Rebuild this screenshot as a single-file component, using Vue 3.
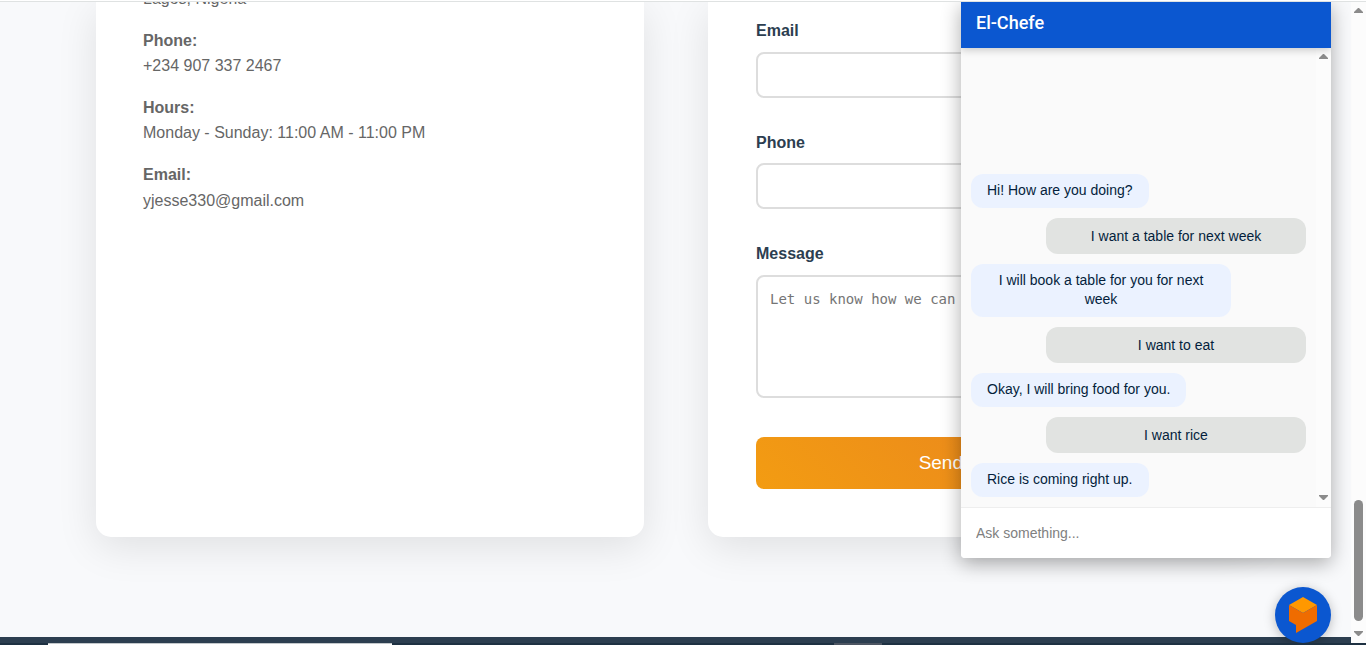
<script setup>
const details = [
  { label: 'Phone:', value: '+234 907 337 2467' },
  { label: 'Hours:', value: 'Monday - Sunday: 11:00 AM - 11:00 PM' },
  { label: 'Email:', value: 'yjesse330@gmail.com' },
]

const messages = [
  { from: 'bot', text: 'Hi! How are you doing?' },
  { from: 'user', text: 'I want a table for next week' },
  { from: 'bot', text: 'I will book a table for you for next week' },
  { from: 'user', text: 'I want to eat' },
  { from: 'bot', text: 'Okay, I will bring food for you.' },
  { from: 'user', text: 'I want rice' },
  { from: 'bot', text: 'Rice is coming right up.' },
]
</script>

<template>
  <div class="screen">
    <div class="edge"></div>
    <div class="viewport">
      <main class="page">
        <section class="contact">
          <div class="card info">
            <p>Lagos, Nigeria</p>
            <p v-for="d in details" :key="d.label">
              <strong>{{ d.label }}</strong><br />{{ d.value }}
            </p>
          </div>
          <form class="card form" @submit.prevent>
            <div class="field">
              <label for="email">Email</label>
              <input id="email" type="email" />
            </div>
            <div class="field">
              <label for="phone">Phone</label>
              <input id="phone" type="tel" />
            </div>
            <div class="field">
              <label for="message">Message</label>
              <textarea id="message" placeholder="Let us know how we can help"></textarea>
            </div>
            <button class="send" type="submit">Send Message</button>
          </form>
        </section>
        <footer class="footer"></footer>
      </main>
      <div class="scrollbar">
        <svg width="9" height="5" viewBox="0 0 9 5"><path d="M4 0h1l4 4v1H0V4z" /></svg>
        <div class="thumb"></div>
        <svg width="9" height="5" viewBox="0 0 9 5"><path d="M0 0h9v1L5 5H4L0 1z" /></svg>
      </div>

      <aside class="chat">
        <header class="chat-title">El-Chefe</header>
        <div class="chat-body">
          <div class="messages">
            <div v-for="(m, i) in messages" :key="i" class="bubble" :class="m.from">{{ m.text }}</div>
          </div>
          <div class="chat-scroll">
            <svg width="9" height="5" viewBox="0 0 9 5"><path d="M4 0h1l4 4v1H0V4z" /></svg>
            <svg width="9" height="5" viewBox="0 0 9 5"><path d="M0 0h9v1L5 5H4L0 1z" /></svg>
          </div>
        </div>
        <input class="ask" type="text" placeholder="Ask something..." aria-label="Ask something" />
      </aside>

      <button class="launcher" type="button" aria-label="Toggle chat">
        <svg width="28" height="36" viewBox="0 0 28 36">
          <path fill="#ff9800" d="M14 0L28 8L14 16L0 8z" />
          <path fill="#ef6c00" d="M0 8L14 16L28 8V24L7 36V28L0 24z" />
        </svg>
      </button>
    </div>
    <div class="taskbar">
      <div class="task-search"></div>
      <div class="task-app"></div>
    </div>
  </div>
</template>

<style>
body {
  margin: 0;
  overflow: hidden;
}
</style>

<style scoped>
* {
  box-sizing: border-box;
}
.screen {
  display: flex;
  flex-direction: column;
  height: 100vh;
  background: #f8f9fa;
  font-family: "Liberation Sans", Arial, sans-serif;
  font-size: 16px;
  line-height: 1.6;
}
.edge {
  flex: none;
  height: 2px;
  background: #fff;
  border-bottom: 1px solid #dfe2e2;
}
.viewport {
  position: relative;
  flex: 1;
  display: flex;
  min-height: 0;
  overflow: hidden;
}
.page {
  flex: 1;
  display: flex;
  flex-direction: column;
  background: #f8f9fb;
}
.contact {
  flex: 1;
  display: grid;
  grid-template-columns: 1fr 1fr;
  gap: 64px;
  padding: 0 95px 100px 96px;
}
.card {
  background: #fff;
  border-radius: 0 0 15px 15px;
  box-shadow: 0 10px 40px rgba(0, 0, 0, 0.1);
}
.info {
  padding: 0 47px;
  color: #666;
}
.info p {
  margin: 0 0 16px;
}
.info p:first-child {
  margin-top: -16px;
}
.form {
  display: flex;
  flex-direction: column;
  justify-content: flex-end;
  gap: 32px;
  padding: 0 48px 48px;
}
.field {
  display: flex;
  flex-direction: column;
  gap: 8px;
}
.field label {
  color: #2c3e50;
  font-weight: 700;
}
.field input,
.field textarea {
  display: block;
  width: 100%;
  height: 46px;
  margin: 0;
  padding: 13px 12px;
  border: 2px solid #ddd;
  border-radius: 8px;
  background: #fff;
  font-family: "Liberation Sans", Arial, sans-serif;
  font-size: 16px;
}
.field textarea {
  height: 123px;
  margin-bottom: 7px;
  font-family: "DejaVu Sans Mono", monospace;
  font-size: 14px;
  line-height: 19px;
  resize: none;
}
.field textarea::placeholder {
  color: #757575;
}
.send {
  height: 52px;
  border: 0;
  border-radius: 8px;
  background: linear-gradient(45deg, #f39c12, #e67e22);
  color: #fff;
  font-family: inherit;
  font-size: 19px;
}
.footer {
  height: 6px;
  background: #2c3e50;
}
.scrollbar {
  flex: none;
  display: flex;
  flex-direction: column;
  align-items: center;
  width: 15px;
  padding: 6px 0 7px;
  background: #fcfcfc;
  fill: #8b8b8b;
}
.thumb {
  width: 9px;
  height: 121px;
  margin: auto 0 10px;
  border-radius: 5px;
  background: #8b8b8b;
}
.chat {
  position: absolute;
  top: 0;
  right: 35px;
  bottom: 85px;
  display: flex;
  flex-direction: column;
  width: 370px;
  overflow: hidden;
  border-radius: 0 0 4px 4px;
  background: #fafafa;
  box-shadow: 0 5px 20px rgba(0, 0, 0, 0.33);
}
.chat-title {
  z-index: 1;
  flex: none;
  height: 46px;
  padding: 0 15px;
  background: #0b57d0;
  box-shadow: 0 2px 8px rgba(0, 0, 0, 0.2);
  color: #fff;
  font-family: Roboto, sans-serif;
  font-size: 18px;
  font-weight: 500;
  line-height: 42px;
}
.chat-body {
  flex: 1;
  display: flex;
  min-height: 0;
}
.messages {
  flex: 1;
  display: flex;
  flex-direction: column;
  justify-content: flex-end;
  gap: 10px;
  padding: 10px;
}
.bubble {
  align-self: flex-start;
  max-width: 260px;
  padding: 7px 16px 8px;
  border-radius: 12px;
  background: #ebf2ff;
  color: #041e3c;
  font-size: 14px;
  line-height: 19px;
  text-align: center;
}
.bubble.user {
  align-self: flex-end;
  width: 260px;
  padding: 9px 16px 8px;
  background: #e1e3e1;
}
.chat-scroll {
  display: flex;
  flex-direction: column;
  align-items: center;
  justify-content: space-between;
  width: 15px;
  padding: 6px 0 7px;
  background: #fcfcfc;
  fill: #8b8b8b;
}
.ask {
  flex: none;
  height: 51px;
  margin: 0;
  padding: 0 15px;
  border: 0;
  border-top: 1px solid #eee;
  border-radius: 0;
  background: #fff;
  font-family: inherit;
  font-size: 14px;
}
.ask::placeholder {
  color: #808080;
}
.launcher {
  position: absolute;
  right: 35px;
  bottom: 0;
  display: flex;
  align-items: center;
  justify-content: center;
  width: 56px;
  height: 56px;
  padding: 0;
  border: 0;
  border-radius: 50%;
  background: #0b57d0;
  box-shadow: 0 2px 12px rgba(0, 0, 0, 0.25);
}
.taskbar {
  flex: none;
  display: flex;
  height: 2px;
  padding-left: 48px;
  background: #1e3142;
}
.task-search {
  width: 344px;
  margin-right: 442px;
  background: #fff;
  border-top: 1px solid #c3c8cb;
}
.task-app {
  width: 48px;
  background: #4c5562;
}
</style>
